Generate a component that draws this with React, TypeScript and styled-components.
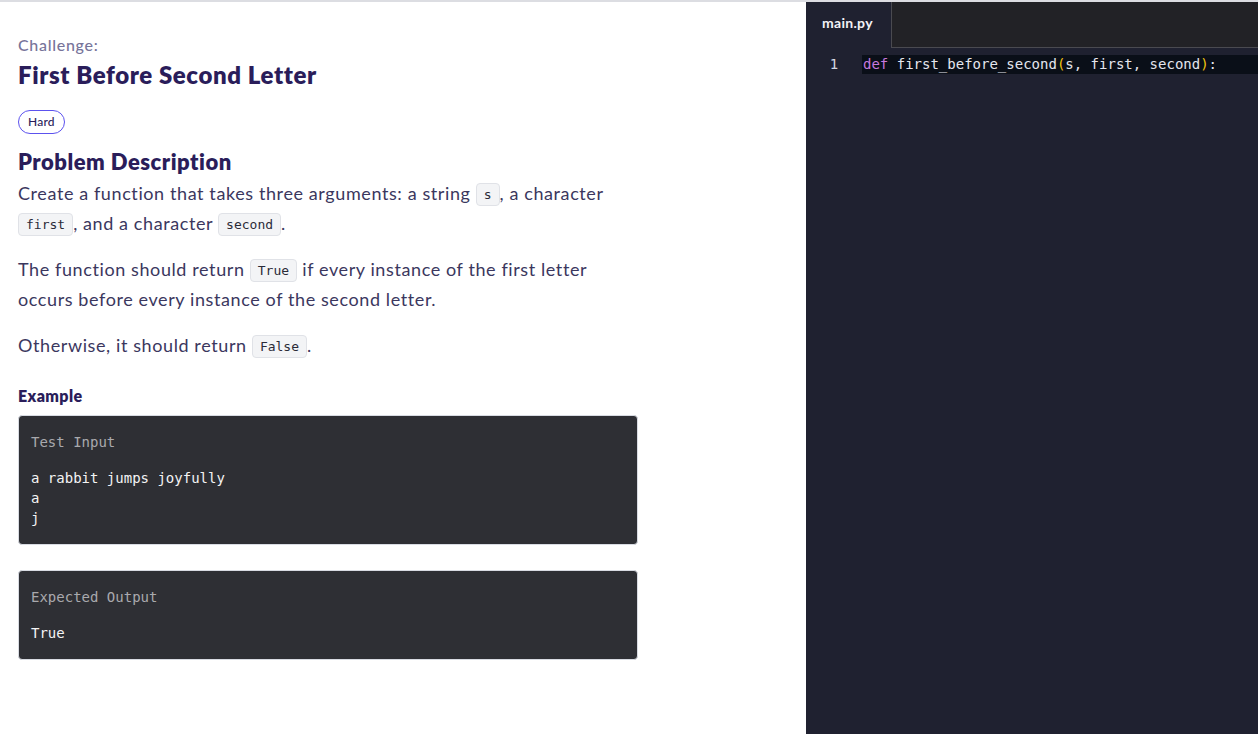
import React from "react";
import styled, { createGlobalStyle } from "styled-components";

const GlobalStyle = createGlobalStyle`
  html, body {
    margin: 0;
    padding: 0;
    background: #ffffff;
  }
  * {
    box-sizing: border-box;
  }
`;

const Page = styled.div`
  display: flex;
  height: 734px;
  border-top: 2px solid #dcdde2;
  overflow: hidden;
`;

const Problem = styled.div`
  flex: 1;
  padding: 33px 18px 0 18px;
  font-family: Lato, "Noto Sans", sans-serif;
  color: #3b375e;
`;

const Kicker = styled.div`
  font-size: 16px;
  line-height: 20px;
  letter-spacing: 0.7px;
  color: #77749a;
  font-weight: 500;
`;

const Title = styled.h1`
  margin: 4px 0 0;
  font-size: 24px;
  line-height: 32px;
  letter-spacing: 0.6px;
  font-weight: 800;
  color: #2a1d5a;
`;

const Badge = styled.span`
  display: inline-block;
  margin-top: 19px;
  height: 24px;
  padding: 0 9px;
  border: 1px solid #5c52ee;
  border-radius: 12px;
  font-size: 12px;
  line-height: 22px;
  letter-spacing: 0.2px;
  color: #2a1d5a;
  font-weight: 500;
`;

const Heading = styled.h2`
  margin: 13px 0 1px;
  font-size: 22px;
  line-height: 30px;
  letter-spacing: 0.5px;
  font-weight: 800;
  color: #2a1d5a;
`;

const Para = styled.p`
  margin: 0 0 16px;
  max-width: 605px;
  font-size: 18px;
  line-height: 30px;
  letter-spacing: 0.6px;
`;

const Code = styled.code`
  display: inline-block;
  height: 23px;
  padding: 0 7px;
  font-family: "DejaVu Sans Mono", "Liberation Mono", monospace;
  font-size: 13px;
  line-height: 21px;
  letter-spacing: 0;
  vertical-align: 1px;
  background: #f3f4f6;
  border: 1px solid #e0e2e7;
  border-radius: 4px;
  color: #2b2b38;
`;

const SubHeading = styled.h3`
  margin: 25px 0 8px;
  font-size: 16px;
  line-height: 22px;
  letter-spacing: 0.4px;
  font-weight: 800;
  color: #2a1d5a;
`;

const Block = styled.div`
  width: 620px;
  margin-bottom: 25px;
  padding: 16px 12px;
  background: #2e2f34;
  border: 1px solid #d8dbe2;
  border-radius: 4px;
  font-family: "DejaVu Sans Mono", "Liberation Mono", monospace;
  font-size: 14px;
  line-height: 20px;
  color: #f4f4f4;
`;

const BlockLabel = styled.div`
  color: #a9a9ad;
  margin-bottom: 16px;
`;

const Editor = styled.div`
  width: 452px;
  display: flex;
  flex-direction: column;
  background: #1f2130;
`;

const TabBar = styled.div`
  display: flex;
  height: 46px;
  background: #222226;
`;

const Tab = styled.div`
  width: 85px;
  padding-left: 16px;
  background: #1f2130;
  font-family: Lato, "Noto Sans", sans-serif;
  font-size: 14px;
  font-weight: 700;
  letter-spacing: 0.3px;
  line-height: 42px;
  color: #f2f2f6;
`;

const TabFill = styled.div`
  flex: 1;
  border-left: 1px solid #4a4a50;
  border-bottom: 1px solid #4a4a50;
`;

const Lines = styled.div`
  padding-top: 7px;
  font-family: "DejaVu Sans Mono", "Liberation Mono", monospace;
  font-size: 14px;
`;

const Line = styled.div`
  display: flex;
  height: 19px;
  line-height: 19px;
`;

const Gutter = styled.div`
  width: 56px;
  text-align: center;
  color: #d4d6e0;
`;

const LineText = styled.div<{ $active?: boolean }>`
  flex: 1;
  padding-left: 1px;
  white-space: pre;
  color: #e4e6ee;
  background: ${(p) => (p.$active ? "#0a0f18" : "transparent")};
`;

const Tok = styled.span<{ $c: string }>`
  color: ${(p) => p.$c};
`;

export default function App() {
  return (
    <>
      <GlobalStyle />
      <Page>
        <Problem>
          <Kicker>Challenge:</Kicker>
          <Title>First Before Second Letter</Title>
          <Badge>Hard</Badge>
          <Heading>Problem Description</Heading>
          <Para>
            Create a function that takes three arguments: a string <Code>s</Code>, a character{" "}
            <Code>first</Code>, and a character <Code>second</Code>.
          </Para>
          <Para>
            The function should return <Code>True</Code> if every instance of the first letter
            occurs before every instance of the second letter.
          </Para>
          <Para>
            Otherwise, it should return <Code>False</Code>.
          </Para>
          <SubHeading>Example</SubHeading>
          <Block>
            <BlockLabel>Test Input</BlockLabel>
            <div>a rabbit jumps joyfully</div>
            <div>a</div>
            <div>j</div>
          </Block>
          <Block>
            <BlockLabel>Expected Output</BlockLabel>
            <div>True</div>
          </Block>
        </Problem>
        <Editor>
          <TabBar>
            <Tab>main.py</Tab>
            <TabFill />
          </TabBar>
          <Lines>
            <Line>
              <Gutter>1</Gutter>
              <LineText $active>
                <Tok $c="#c678dd">def</Tok> first_before_second<Tok $c="#f1c40f">(</Tok>s, first, second
                <Tok $c="#f1c40f">)</Tok>:
              </LineText>
            </Line>
          </Lines>
        </Editor>
      </Page>
    </>
  );
}
